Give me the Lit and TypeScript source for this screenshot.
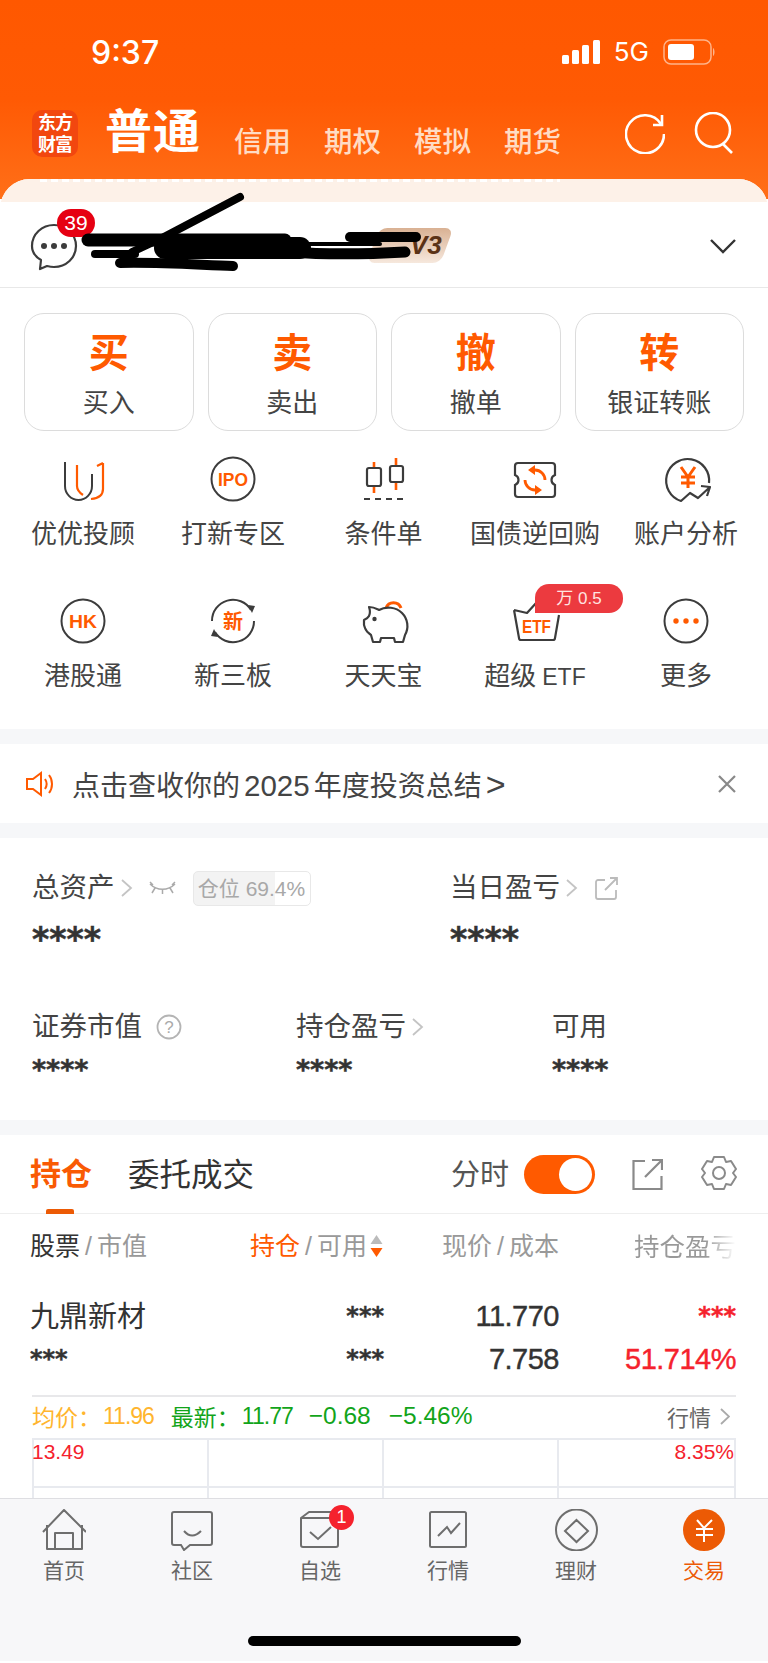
import { LitElement, html, css, svg } from 'lit';
import { customElement } from 'lit/decorators.js';

const OR = '#ff5a00';
const DK = '#3c3c3c';

const gridIcons: Record<string, unknown> = {
  uu: svg`<path d="M4 6V30a13.500 14 0 0 0 27 0V18" fill="none" stroke="${DK}" stroke-width="2"/><path d="M16 9V30Q16 35 22 39M42 7V33Q42 42 30 43M42 7L36 10" fill="none" stroke="${OR}" stroke-width="2.200"/>`,
  ipo: svg`<circle cx="22" cy="23" r="21.500" fill="none" stroke="${DK}" stroke-width="2"/><text x="22" y="30" text-anchor="middle" class="ic" font-size="19" textLength="30" lengthAdjust="spacingAndGlyphs">IPO</text>`,
  cond: svg`<path d="M12 6V37M34 2V34" stroke="${OR}" stroke-width="2.600"/><rect x="5" y="12" width="14" height="18" rx="2" fill="#fff" stroke="${DK}" stroke-width="2.200"/><rect x="28" y="10" width="13" height="16" rx="2" fill="#fff" stroke="${DK}" stroke-width="2.200"/><path d="M2 43H43" stroke="${DK}" stroke-width="2.200" stroke-dasharray="6 5"/>`,
  bond: svg`<path d="M5 7h34a3 3 0 0 1 3 3v9c-2.500 1-3.500 3-3.500 5s1 4 3.500 5v9a3 3 0 0 1-3 3H5a3 3 0 0 1-3-3v-9c2.500-1 3.500-3 3.500-5s-1-4-3.500-5v-9a3 3 0 0 1 3-3z" fill="none" stroke="${DK}" stroke-width="2.200"/><path d="M32 24a10 10 0 0 0-10-10h-1M12 24a10 10 0 0 0 10 10h1" fill="none" stroke="${OR}" stroke-width="2.800"/><path d="M22 9L15 14L22 19zM22 39L29 34L22 29z" fill="${OR}"/>`,
  ana: svg`<path d="M45 27A21.500 21.500 0 1 0 17 45L26 37L34 42L46 31M37 30L46 31L43 40" fill="none" stroke="${DK}" stroke-width="2.200" stroke-linejoin="round"/><path d="M17 11L24 21L31 11M17 21H31M17 27H31M24 21V32" fill="none" stroke="${OR}" stroke-width="3"/>`,
  hk: svg`<circle cx="22" cy="23" r="21.500" fill="none" stroke="${DK}" stroke-width="2"/><text x="22" y="30" text-anchor="middle" class="ic" font-size="19" textLength="28" lengthAdjust="spacingAndGlyphs">HK</text>`,
  xin: svg`<path d="M1 23A21 21 0 0 1 40 12M43 23A21 21 0 0 1 4 34" fill="none" stroke="${DK}" stroke-width="2"/><path d="M37 7L44 8L41 15zM7 39L0 38L3 31z" fill="${DK}"/><text x="22" y="31" text-anchor="middle" class="ic" font-size="20">新</text>`,
  pig: svg`<path d="M24 10A8 8 0 0 1 39 10" fill="none" stroke="${OR}" stroke-width="3"/><path d="M7 9C12 9 15 11 17 12C24 8 34 9 40 15C46 21 47 30 43 37L41 44H33L32 40H19L18 44H11L9 37C6 35 4 33 3 30L2 27V22C4 21 6 20 7 18C8 16 8 12 7 9Z" fill="#fff" stroke="${DK}" stroke-width="2.200" stroke-linejoin="round"/><circle cx="12.500" cy="21" r="2.200" fill="${DK}"/>`,
  etf: svg`<path d="M1 12L14 15L24 4M46 17L42 40a2 2 0 0 1-2 2H8a2 2 0 0 1-2-2L1 12" fill="none" stroke="${DK}" stroke-width="2.200" stroke-linejoin="round"/><text x="23.500" y="35" text-anchor="middle" class="ic" font-size="19" textLength="29" lengthAdjust="spacingAndGlyphs">ETF</text>`,
  more: svg`<circle cx="22" cy="23" r="21.500" fill="none" stroke="${DK}" stroke-width="2"/><circle cx="12" cy="23" r="2.700" fill="${OR}"/><circle cx="22" cy="23" r="2.700" fill="${OR}"/><circle cx="32" cy="23" r="2.700" fill="${OR}"/>`,
};

const grid = [
  { k: 'uu', t: '优优投顾' },
  { k: 'ipo', t: '打新专区' },
  { k: 'cond', t: '条件单' },
  { k: 'bond', t: '国债逆回购' },
  { k: 'ana', t: '账户分析' },
  { k: 'hk', t: '港股通' },
  { k: 'xin', t: '新三板' },
  { k: 'pig', t: '天天宝' },
  { k: 'etf', t: '超级', en: 'ETF', tag: '万 0.5' },
  { k: 'more', t: '更多' },
];

const G = '#6e6e6e';
const tabs = [
  { t: '首页', i: svg`<path d="M1 23L22 1L44 23M5 16V40H40V16M13 40V24H31V40" fill="none" stroke="${G}" stroke-width="2" stroke-linejoin="round"/>` },
  { t: '社区', i: svg`<path d="M4 3H40a2 2 0 0 1 2 2V34a2 2 0 0 1-2 2H20L14 41L11 36H4a2 2 0 0 1-2-2V5a2 2 0 0 1 2-2z" fill="none" stroke="${G}" stroke-width="2"/><path d="M14 22Q22 31 31 22" fill="none" stroke="${G}" stroke-width="2"/>` },
  { t: '自选', i: svg`<path d="M3 9L11 3H33M3 9H40V36a2 2 0 0 1-2 2H5a2 2 0 0 1-2-2z" fill="none" stroke="${G}" stroke-width="2" stroke-linejoin="round"/><path d="M12 23L20 30L33 18" fill="none" stroke="${G}" stroke-width="2"/>`, badge: '1' },
  { t: '行情', i: svg`<rect x="4" y="3" width="36" height="35" rx="1.500" fill="none" stroke="${G}" stroke-width="2"/><path d="M12 27L21 18L25 24L34 14" fill="none" stroke="${G}" stroke-width="2"/>` },
  { t: '理财', i: svg`<circle cx="22.500" cy="21" r="20.500" fill="none" stroke="${G}" stroke-width="2"/><path d="M22.500 11L34 22L22.500 33L11 22z" fill="none" stroke="${G}" stroke-width="2"/>` },
  { t: '交易', on: true, i: svg`<circle cx="22" cy="21" r="21" fill="#ec5a05"/><path d="M15 11L22 19L30 11M14 20H31M14 26H31M22 19V33" fill="none" stroke="#fff" stroke-width="2"/>` },
];

@customElement('app-root')
export class AppRoot extends LitElement {
  static styles = css`
    :host {
      display: flex;
      flex-direction: column;
      width: 768px;
      height: 1663px;
      overflow: hidden;
      background: #fff;
      color: #333;
      font-family: 'Liberation Sans', 'Noto Sans CJK SC', sans-serif;
    }
    .ic {
      fill: #ff5a00;
      font-family: 'Liberation Sans', 'Noto Sans CJK SC', sans-serif;
      font-weight: 700;
    }

    .top {
      flex: none;
      height: 199px;
      background: linear-gradient(#ff5800 0%, #ff5a04 50%, #ff6f18 100%);
      color: #fff;
    }
    .status {
      height: 102px;
      display: flex;
      align-items: flex-start;
      padding: 35px 53px 0 91px;
      box-sizing: border-box;
      justify-content: space-between;
    }
    .time {
      font: 500 32px/36px Inter, sans-serif;
    }
    .sys {
      display: flex;
      align-items: center;
      gap: 14px;
      margin-top: 2px;
    }
    .five {
      font: 400 26px/30px Inter, sans-serif;
    }
    .nav {
      display: flex;
      align-items: flex-end;
      padding: 0 34px 0 32px;
      height: 58px;
    }
    .logo {
      width: 46px;
      height: 47px;
      border-radius: 10px;
      background: #f2470f;
      font-size: 18px;
      line-height: 22px;
      font-weight: 700;
      text-align: center;
      margin-right: 27px;
      margin-bottom: 3px;
      letter-spacing: -1px;
      display: flex;
      align-items: center;
      justify-content: center;
    }
    .main-tab {
      font-size: 47px;
      line-height: 56px;
      font-weight: 700;
      margin-right: 33px;
      letter-spacing: 1px;
    }
    .sub-tab {
      font-size: 28.500px;
      line-height: 38px;
      color: #ffdcc4;
      margin-right: 33px;
      font-weight: 500;
      margin-bottom: -1px;
    }
    .nav-icons {
      margin-left: auto;
      display: flex;
      gap: 29px;
      margin-bottom: 6px;
    }

    .main {
      flex: 1;
      min-height: 0;
      overflow: hidden;
      margin-top: -20px;
      border-radius: 30px 30px 0 0;
      background: #fff;
      position: relative;
    }
    .tint {
      height: 23px;
      background: #fdf1e8;
    }
    .tint::before {
      content: '';
      display: block;
      height: 3px;
      margin: 0 208px 0 40px;
      background: repeating-linear-gradient(90deg, #fff 0 7px, rgba(255, 255, 255, 0) 7px 11px);
    }
    .account {
      position: relative;
      height: 86px;
      border-bottom: 1px solid #e8e8e8;
      box-sizing: border-box;
      display: flex;
      align-items: center;
      padding: 0 32px 0 30px;
    }
    .chat {
      position: relative;
      width: 48px;
      height: 48px;
      margin-top: 4px;
    }
    .chat-badge {
      position: absolute;
      left: 27px;
      top: -14px;
      width: 38px;
      height: 28px;
      border-radius: 14px;
      background: #e60012;
      color: #fff;
      font-size: 21px;
      line-height: 28px;
      text-align: center;
    }
    .level {
      position: absolute;
      left: 373px;
      top: 26px;
      width: 74px;
      height: 35px;
      border-radius: 8px;
      transform: skewX(-20deg);
      background: linear-gradient(#d9b193, #f6e8dd);
    }
    .level-text {
      position: absolute;
      left: 410px;
      top: 26px;
      font: italic 700 26px/35px 'Liberation Sans', sans-serif;
      color: #5b3216;
    }
    .scribble {
      position: absolute;
      left: 0;
      top: 0;
      overflow: visible;
      pointer-events: none;
    }
    .chev {
      margin-left: auto;
      margin-top: 2px;
    }

    .actions {
      display: grid;
      grid-template-columns: repeat(4, 1fr);
      gap: 14px;
      padding: 25px 24px 0;
    }
    .action {
      height: 118px;
      box-sizing: border-box;
      border: 1px solid #dcdcdc;
      border-radius: 20px;
      display: flex;
      flex-direction: column;
      align-items: center;
      padding-top: 13px;
    }
    .big {
      font-size: 40px;
      line-height: 52px;
      font-weight: 700;
      color: #ff5a00;
    }
    .small {
      font-size: 26px;
      line-height: 36px;
      margin-top: 6px;
      color: #444;
    }

    .grid {
      display: grid;
      grid-template-columns: 150px 150px 151px 152px 150px;
      grid-auto-rows: 142px;
      padding: 25px 0 0 8px;
      height: 298px;
      box-sizing: border-box;
    }
    .cell {
      position: relative;
      display: flex;
      flex-direction: column;
      align-items: center;
    }
    .cell svg {
      display: block;
      overflow: visible;
    }
    .lbl {
      margin-top: 14px;
      font-size: 26px;
      line-height: 36px;
      color: #444;
      white-space: nowrap;
    }
    .lbl-en {
      font-size: 23px;
      margin-left: 6px;
    }
    .tag {
      position: absolute;
      left: 76px;
      top: -14px;
      width: 88px;
      height: 29px;
      background: #ec3a3f;
      border-radius: 14px 14px 14px 0;
      color: #ffe4e0;
      font-size: 17px;
      line-height: 29px;
      text-align: center;
    }

    .band {
      height: 15px;
      background: #f6f7f9;
    }
    .notice {
      height: 79px;
      display: flex;
      align-items: center;
      padding: 0 32px 0 26px;
      font-size: 28px;
      color: #444;
    }
    .notice-text {
      margin-left: 19px;
      white-space: nowrap;
    }
    .year {
      font-size: 29.500px;
      margin: 0 4px;
    }
    .gt {
      font-size: 34px;
      line-height: 28px;
      margin-left: 4px;
    }
    .close {
      margin-left: auto;
    }

    .assets {
      height: 282px;
      box-sizing: border-box;
      padding: 30px 0 0 32px;
    }
    .row1 {
      display: grid;
      grid-template-columns: 418px 1fr;
    }
    .row2 {
      display: grid;
      grid-template-columns: 264px 256px 1fr;
      margin-top: 48px;
    }
    .lab {
      display: flex;
      align-items: center;
      font-size: 27.500px;
      line-height: 40px;
      color: #444;
      height: 40px;
    }
    .stars {
      font-family: 'DejaVu Sans', sans-serif;
      font-weight: 700;
      font-size: 33px;
      line-height: 38px;
      color: #333;
      margin-top: 13px;
      -webkit-text-stroke: 0.500px #333;
    }
    .stars.s {
      font-size: 27px;
      line-height: 32px;
      margin-top: 7px;
    }
    .pill {
      margin-left: 17px;
      width: 118px;
      height: 35px;
      box-sizing: border-box;
      border: 1px solid #e8e8e8;
      border-radius: 5px;
      font-size: 21px;
      line-height: 33px;
      color: #a8a8a8;
      text-align: center;
      white-space: nowrap;
      background: linear-gradient(90deg, #f3f3f3 69.4%, #fff 69.4%);
    }
    .chev-s {
      margin-left: 6px;
    }
    .eye {
      margin-left: 16px;
    }
    .out {
      margin-left: 17px;
    }
    .help {
      margin-left: 14px;
    }

    .pos-tabs {
      height: 79px;
      box-sizing: border-box;
      border-bottom: 1px solid #eee;
      display: flex;
      align-items: flex-start;
      padding: 18px 31px 0 30px;
      position: relative;
    }
    .t-on {
      font-size: 31px;
      line-height: 44px;
      font-weight: 700;
      color: #f95a04;
    }
    .t-off {
      font-size: 31.500px;
      line-height: 44px;
      margin-left: 36px;
      color: #333;
    }
    .underline {
      position: absolute;
      left: 46px;
      bottom: -1px;
      width: 28px;
      height: 5px;
      border-radius: 2px 2px 0 0;
      background: #ec5a05;
    }
    .fen {
      margin-left: auto;
      font-size: 29px;
      line-height: 44px;
      color: #555;
    }
    .toggle {
      margin: 2px 37px 0 15px;
      width: 71px;
      height: 39px;
      border-radius: 20px;
      background: #ff5a00;
      display: flex;
      justify-content: flex-end;
      align-items: center;
      padding-right: 3px;
      box-sizing: border-box;
    }
    .knob {
      width: 33px;
      height: 33px;
      border-radius: 50%;
      background: #fff;
    }
    .share {
      margin-top: 6px;
    }
    .gear {
      margin-left: 38px;
      margin-top: 2px;
    }

    .thead,
    .trow {
      display: grid;
      grid-template-columns: 200px 154px 175px 1fr;
      padding: 0 32px 0 30px;
      align-items: center;
    }
    .thead {
      height: 60px;
      font-size: 25px;
      color: #999;
    }
    .thead > div {
      text-align: right;
      white-space: nowrap;
    }
    .thead > div:first-child {
      text-align: left;
    }
    .dk {
      color: #333;
    }
    .on {
      color: #ff5a00;
    }
    .slash {
      margin: 0 5px;
    }
    .sort {
      display: inline-block;
      width: 15px;
      height: 24px;
      margin-left: 2px;
      vertical-align: -3px;
    }
    .fade {
      font-size: 25.500px;
      background: linear-gradient(90deg, #999 70%, #fff 100%);
      -webkit-background-clip: text;
      background-clip: text;
      color: transparent;
    }
    .stocks {
      padding-top: 18px;
      height: 112px;
      box-sizing: border-box;
    }
    .trow {
      height: 43px;
    }
    .r {
      text-align: right;
    }
    .nm {
      font-size: 29px;
      color: #333;
    }
    .st {
      font-family: 'DejaVu Sans', sans-serif;
      font-weight: 700;
      font-size: 24px;
      line-height: 24px;
      color: #333;
      margin-top: 4px;
      -webkit-text-stroke: 0.400px #333;
    }
    .num {
      font-size: 29px;
      color: #333;
      margin-top: 6px;
      letter-spacing: -0.500px;
      -webkit-text-stroke: 0.400px #333;
    }
    .red {
      color: #f5222d;
      -webkit-text-stroke-color: #f5222d;
    }
    .quote {
      margin: 9px 32px 0;
      border-top: 2px solid #e8e8ea;
      height: 43px;
      padding-bottom: 3px;
      display: flex;
      align-items: center;
      font-size: 23px;
      box-sizing: border-box;
      white-space: pre;
    }
    .y {
      color: #ffb52e;
    }
    .g {
      color: #12a41a;
    }
    .ql {
      width: 71px;
    }
    .qn {
      letter-spacing: -1px;
    }
    .qw {
      font-size: 24.500px;
    }
    .m-a {
      margin-left: 17px;
    }
    .m-b {
      margin-left: 16px;
    }
    .m-c {
      margin-left: 18px;
    }
    .hq {
      margin-left: auto;
      color: #666;
      font-size: 22px;
      display: flex;
      align-items: center;
      gap: 9px;
      margin-right: 6px;
    }
    .chart {
      margin: 0 32px;
      height: 120px;
      border: 2px solid #e8eaef;
      border-bottom: 0;
      display: grid;
      grid-template-columns: repeat(4, 1fr);
      grid-template-rows: 48px 70px;
      box-sizing: border-box;
      font-size: 21px;
      color: #f5222d;
    }
    .chart > div {
      border-right: 2px solid #e8eaef;
      border-bottom: 2px solid #e8eaef;
      line-height: 23px;
    }
    .chart > div:first-child {
      text-indent: -2px;
    }
    .chart > div:nth-child(4n) {
      border-right: 0;
      text-align: right;
    }
    .chart > div:nth-child(n + 5) {
      border-bottom: 0;
    }

    .tabbar {
      flex: none;
      height: 165px;
      box-sizing: border-box;
      background: #f7f7f9;
      border-top: 1px solid #dedee2;
      border-bottom: 2px solid #fff;
      display: flex;
      flex-direction: column;
      position: relative;
    }
    .tabs {
      display: grid;
      grid-template-columns: repeat(6, 128px);
      padding-top: 10px;
    }
    .tab {
      position: relative;
      display: flex;
      flex-direction: column;
      align-items: center;
      font-size: 21px;
      line-height: 30px;
      color: #666;
    }
    .tab.active {
      color: #ec5a05;
    }
    .tab svg {
      display: block;
      margin-bottom: 5px;
    }
    .tab-badge {
      position: absolute;
      left: 73px;
      top: -4px;
      width: 25px;
      height: 25px;
      border-radius: 50%;
      background: #f5222d;
      color: #fff;
      font-size: 18px;
      line-height: 25px;
      text-align: center;
    }
    .home {
      position: absolute;
      left: 248px;
      top: 137px;
      width: 273px;
      height: 10px;
      border-radius: 5px;
      background: #000;
    }
  `;

  private chevron() {
    return html`<svg class="chev-s" width="12" height="18" viewBox="0 0 12 18" fill="none" stroke="#c4c4c4" stroke-width="1.800"><path d="M1 1l9 8-9 8" /></svg>`;
  }

  render() {
    return html`
      <div class="top">
        <div class="status">
          <div class="time">9:37</div>
          <div class="sys">
            <svg width="38" height="24" viewBox="0 0 38 24" fill="#fff">
              <rect x="0" y="15" width="7" height="9" rx="1.500" />
              <rect x="10" y="10" width="7" height="14" rx="1.500" />
              <rect x="20" y="5" width="7" height="19" rx="1.500" />
              <rect x="31" y="0" width="7" height="24" rx="1.500" />
            </svg>
            <span class="five">5G</span>
            <svg width="52" height="26" viewBox="0 0 52 26">
              <rect x="1" y="1" width="47" height="24" rx="7" fill="none" stroke="#ffb48a" stroke-width="1.500" />
              <rect x="5" y="5" width="26" height="16" rx="3" fill="#fff" />
              <path d="M50 9c2 1 2 7 0 8z" fill="#ffb48a" />
            </svg>
          </div>
        </div>
        <div class="nav">
          <div class="logo"><div>东方<br />财富</div></div>
          <div class="main-tab">普通</div>
          <div class="sub-tab">信用</div>
          <div class="sub-tab">期权</div>
          <div class="sub-tab">模拟</div>
          <div class="sub-tab">期货</div>
          <div class="nav-icons">
            <svg width="40" height="42" viewBox="0 0 40 42" fill="none" stroke="#fff" stroke-width="2.600">
              <path d="M36 12A19 19 0 1 0 39 22" />
              <path d="M28 13h9V3" />
            </svg>
            <svg width="40" height="42" viewBox="0 0 40 42" fill="none" stroke="#fff" stroke-width="2.600">
              <circle cx="19" cy="18" r="17" />
              <path d="M29 32l9 9" />
            </svg>
          </div>
        </div>
      </div>

      <div class="main">
        <div class="tint"></div>
        <div class="account">
          <div class="chat">
            <svg width="48" height="48" viewBox="0 0 48 48" fill="none">
              <path d="M10 46l1-9C4 33 2 28 2 23 2 11 12 2 24 2s22 9 22 21-10 21-22 21c-3 0-5-.500-7-1z" stroke="#3c3c3c" stroke-width="2.200" stroke-linejoin="round" />
              <circle cx="14" cy="23" r="3" fill="#3c3c3c" />
              <circle cx="24" cy="23" r="3" fill="#3c3c3c" />
              <circle cx="34" cy="23" r="3" fill="#3c3c3c" />
            </svg>
            <div class="chat-badge">39</div>
          </div>
          <div class="level"></div>
          <div class="level-text">V3</div>
          <svg class="chev" width="26" height="16" viewBox="0 0 26 16" fill="none" stroke="#333" stroke-width="2.400">
            <path d="M1 2l12 12L25 2" />
          </svg>
          <svg class="scribble" width="768" height="86" viewBox="0 0 768 86" fill="none" stroke="#000" stroke-linecap="round" stroke-linejoin="round">
            <path d="M240 -5L162 36L132 50" stroke-width="8" />
            <path d="M88 38H285" stroke-width="13" />
            <path d="M165 46H300" stroke-width="22" />
            <path d="M290 50C330 53 370 52 405 50" stroke-width="11" />
            <path d="M350 35H416" stroke-width="10" />
            <path d="M300 42H380" stroke-width="4" />
            <path d="M95 52H135" stroke-width="8" />
            <path d="M120 61C160 60 200 63 233 64" stroke-width="10" />
          </svg>
        </div>

        <div class="actions">
          ${[
            ['买', '买入'],
            ['卖', '卖出'],
            ['撤', '撤单'],
            ['转', '银证转账'],
          ].map(
            ([b, s]) => html`<div class="action"><div class="big">${b}</div><div class="small">${s}</div></div>`
          )}
        </div>

        <div class="grid">
          ${grid.map(
            (g) => html`
              <div class="cell">
                <svg width="44" height="46" viewBox="0 0 44 46">${gridIcons[g.k]}</svg>
                <span class="lbl">${g.t}${g.en ? html`<span class="lbl-en">${g.en}</span>` : ''}</span>
                ${g.tag ? html`<div class="tag">${g.tag}</div>` : ''}
              </div>
            `
          )}
        </div>

        <div class="band"></div>
        <div class="notice">
          <svg width="27" height="26" viewBox="0 0 27 26" fill="none" stroke="#ff5a00" stroke-width="2">
            <path d="M1 8h6l8-6v22l-8-6H1zM19 8c2 3 2 7 0 10M23 4c4 5 4 13 0 18" />
          </svg>
          <span class="notice-text">点击查收你的<span class="year">2025</span>年度投资总结<span class="gt">&gt;</span></span>
          <svg class="close" width="18" height="18" viewBox="0 0 18 18" fill="none" stroke="#888" stroke-width="2.200">
            <path d="M1 1l16 16M17 1L1 17" />
          </svg>
        </div>
        <div class="band"></div>

        <div class="assets">
          <div class="row1">
            <div>
              <div class="lab">
                总资产${this.chevron()}
                <svg class="eye" width="27" height="14" viewBox="0 0 27 14" fill="none" stroke="#aaa" stroke-width="1.500"><path d="M1 3c7 7 18 7 25 0M6 7L3 12M13.500 9v4M21 7l3 5M1 1l3 3M26 1l-3 3" /></svg>
                <div class="pill">仓位 69.4%</div>
              </div>
              <div class="stars">****</div>
            </div>
            <div>
              <div class="lab">
                当日盈亏${this.chevron()}
                <svg class="out" width="23" height="23" viewBox="0 0 23 23" fill="none" stroke="#bbb" stroke-width="1.800"><path d="M10 3H3a2 2 0 0 0-2 2v15a2 2 0 0 0 2 2h16a2 2 0 0 0 2-2v-7M10 13L22 1M15 1h7v7" /></svg>
              </div>
              <div class="stars">****</div>
            </div>
          </div>
          <div class="row2">
            <div>
              <div class="lab">
                证券市值
                <svg class="help" width="26" height="26" viewBox="0 0 26 26"><circle cx="13" cy="13" r="11.500" fill="none" stroke="#b4b4b4" stroke-width="1.800" /><text x="13" y="19" text-anchor="middle" font-size="17" fill="#aaa">?</text></svg>
              </div>
              <div class="stars s">****</div>
            </div>
            <div>
              <div class="lab">持仓盈亏${this.chevron()}</div>
              <div class="stars s">****</div>
            </div>
            <div>
              <div class="lab">可用</div>
              <div class="stars s">****</div>
            </div>
          </div>
        </div>
        <div class="band"></div>

        <div class="pos-tabs">
          <div class="t-on">持仓</div>
          <div class="t-off">委托成交</div>
          <div class="fen">分时</div>
          <div class="toggle"><div class="knob"></div></div>
          <svg class="share" width="31" height="31" viewBox="0 0 31 31" fill="none" stroke="#8a8a8a" stroke-width="2.200"><path d="M13 2H1.500v28h28V17M13 18L30 1M20 1h10v10" /></svg>
          <svg class="gear" width="36" height="36" viewBox="0 0 36 36" fill="none" stroke="#8a8a8a" stroke-width="2">
            <path d="M13 2h10l2 5 5-1 5 8-3 4 3 4-5 8-5-1-2 5H13l-2-5-5 1-5-8 3-4-3-4 5-8 5 1z" stroke-linejoin="round" />
            <circle cx="18" cy="18" r="6" />
          </svg>
          <div class="underline"></div>
        </div>

        <div class="thead">
          <div><span class="dk">股票</span><span class="slash">/</span>市值</div>
          <div><span class="on">持仓</span><span class="slash">/</span>可用<svg class="sort" viewBox="0 0 15 24"><path d="M7.500 1l6 9h-12z" fill="#bbb" /><path d="M7.500 23l6-9h-12z" fill="#ff5a00" /></svg></div>
          <div>现价<span class="slash">/</span>成本</div>
          <div><span class="fade">持仓盈亏</span></div>
        </div>

        <div class="stocks">
          <div class="trow">
            <div class="nm">九鼎新材</div>
            <div class="st r">***</div>
            <div class="num r">11.770</div>
            <div class="st r red">***</div>
          </div>
          <div class="trow">
            <div class="st">***</div>
            <div class="st r">***</div>
            <div class="num r">7.758</div>
            <div class="num r red">51.714%</div>
          </div>
        </div>

        <div class="quote">
          <span class="y ql">均价：</span>
          <span class="y qn">11.96</span>
          <span class="g ql m-a">最新：</span>
          <span class="g qn">11.77</span>
          <span class="g qw m-b">−0.68</span>
          <span class="g qw m-c">−5.46%</span>
          <span class="hq">行情<svg width="10" height="17" viewBox="0 0 10 17" fill="none" stroke="#aaa" stroke-width="1.800"><path d="M1 1l8 7.500-8 7.500" /></svg></span>
        </div>
        <div class="chart">
          <div>13.49</div><div></div><div></div><div>8.35%</div>
          <div></div><div></div><div></div><div></div>
        </div>
      </div>

      <div class="tabbar">
        <div class="tabs">
          ${tabs.map(
            (t) => html`
              <div class="tab ${t.on ? 'active' : ''}">
                <svg width="44" height="42" viewBox="0 0 44 42">${t.i}</svg>
                ${t.t}
                ${t.badge ? html`<div class="tab-badge">${t.badge}</div>` : ''}
              </div>
            `
          )}
        </div>
        <div class="home"></div>
      </div>
    `;
  }
}
